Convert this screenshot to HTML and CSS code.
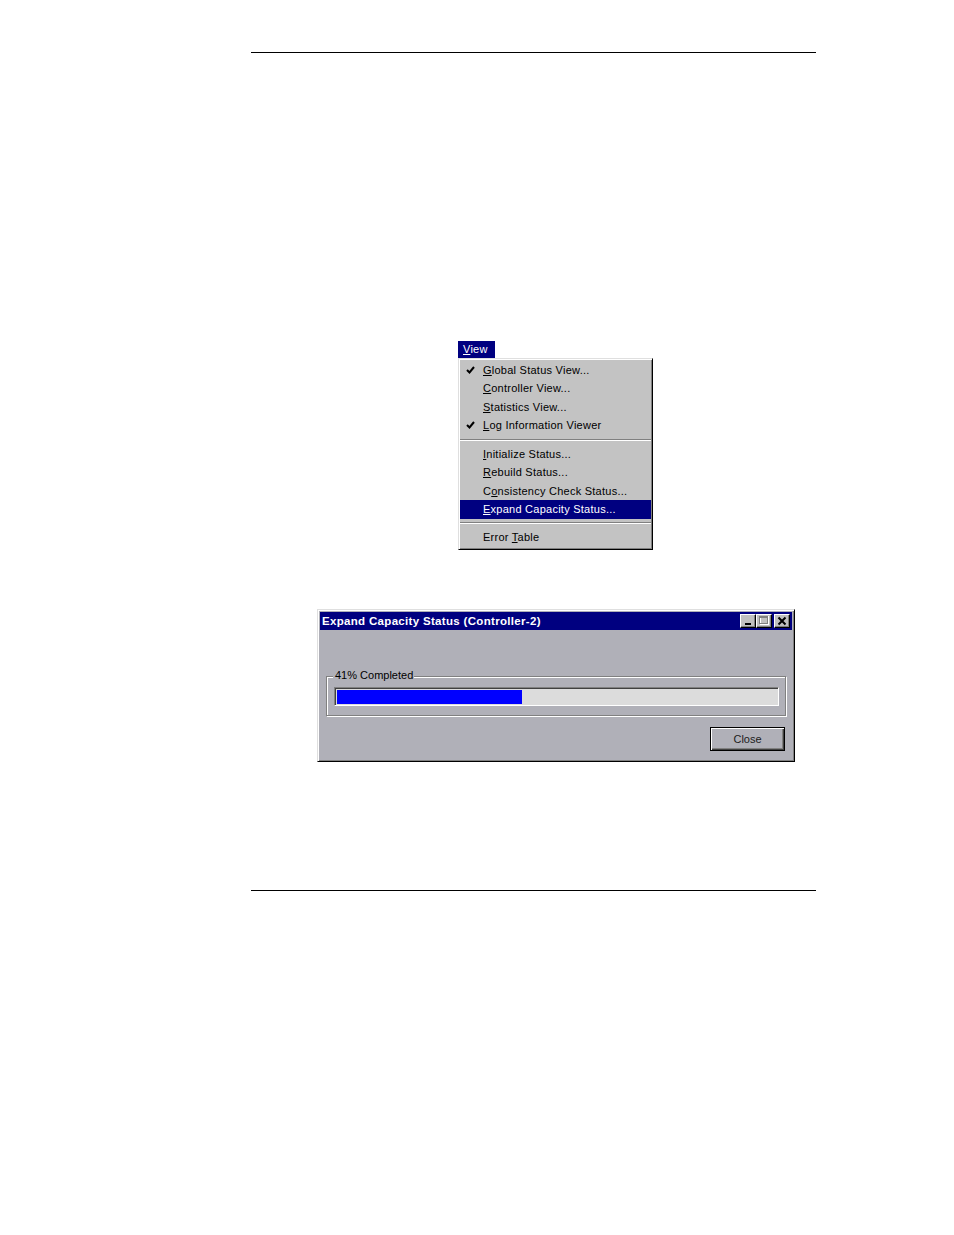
FILE: index.html
```html
<!DOCTYPE html>
<html>
<head>
<meta charset="utf-8">
<link rel="stylesheet" href="styles.css">
</head>
<body>
<div class="page">
  <div class="rule"></div>

  <div class="menu">
    <div class="menu-title"><u>V</u>iew</div>
    <div class="menu-panel">
      <div class="item"><span class="check"><svg width="9" height="9" viewBox="0 0 9 9"><path d="M1 4 L3.5 6.5 L8 1" fill="none" stroke="#000" stroke-width="2"/></svg></span><u>G</u>lobal Status View...</div>
      <div class="item"><u>C</u>ontroller View...</div>
      <div class="item"><u>S</u>tatistics View...</div>
      <div class="item"><span class="check"><svg width="9" height="9" viewBox="0 0 9 9"><path d="M1 4 L3.5 6.5 L8 1" fill="none" stroke="#000" stroke-width="2"/></svg></span><u>L</u>og Information Viewer</div>
      <div class="sep"></div>
      <div class="item"><u>I</u>nitialize Status...</div>
      <div class="item"><u>R</u>ebuild Status...</div>
      <div class="item">C<u>o</u>nsistency Check Status...</div>
      <div class="item active"><u>E</u>xpand Capacity Status...</div>
      <div class="sep sep-b"></div>
      <div class="item">Error <u>T</u>able</div>
    </div>
  </div>

  <div class="dialog">
    <div class="titlebar">
      <span class="title-text">Expand Capacity Status (Controller-2)</span>
      <div class="caption-btns">
        <div class="cbtn"><svg width="12" height="10" viewBox="0 0 12 10"><rect x="3" y="7" width="6" height="2" fill="#000"/></svg></div>
        <div class="cbtn"><svg width="12" height="10" viewBox="0 0 12 10"><rect x="2.5" y="0.5" width="8" height="8" fill="none" stroke="#fff"/><rect x="1.5" y="-0.5" width="8" height="8" fill="none" stroke="#808080"/><rect x="1" y="0" width="9" height="2" fill="#808080"/></svg></div>
        <div class="cbtn close"><svg width="12" height="10" viewBox="0 0 12 10"><path d="M2.5 1.5 L9.5 8.5 M9.5 1.5 L2.5 8.5" stroke="#000" stroke-width="2" fill="none"/></svg></div>
      </div>
    </div>
    <div class="dialog-body">
      <div class="group">
        <span class="group-label">41% Completed</span>
        <div class="progress"><div class="fill" style="width:42%"></div></div>
      </div>
      <div class="btn-row">
        <div class="button">Close</div>
      </div>
    </div>
  </div>

  <div class="rule rule-bottom"></div>
</div>
</body>
</html>
```

FILE: styles.css
```css
html, body {
  margin: 0;
  padding: 0;
  background: #fff;
}
body {
  font-family: "Liberation Sans", Arial, sans-serif;
}
.page {
  width: 565px;
  margin-left: 251px;
  padding-top: 52px;
}
.rule {
  height: 0;
  border-top: 1px solid #000;
}
.rule-bottom {
  margin-top: 128px;
}

/* Menu */
.menu {
  margin-top: 288px;
  margin-left: 207px;
  width: 195px;
  font-size: 11px;
  letter-spacing: 0.25px;
  color: #000;
}
.menu-title {
  width: 37px;
  height: 17px;
  box-sizing: border-box;
  background: #000080;
  color: #fff;
  line-height: 17px;
  padding-left: 5px;
}
.menu-panel {
  box-sizing: border-box;
  width: 195px;
  background: #c3c3c3;
  border: 1px solid;
  border-color: #dfdfdf #000 #000 #dfdfdf;
  box-shadow: inset 1px 1px 0 #fff, inset -1px -1px 0 #808080;
  padding: 1.5px 1px 2.5px 1px;
}
.item {
  position: relative;
  height: 18.5px;
  line-height: 18.5px;
  padding-left: 23px;
  white-space: nowrap;
}
.item.active {
  background: #000080;
  color: #fff;
}
.check {
  position: absolute;
  left: 6px;
  top: 5px;
  width: 9px;
  height: 9px;
  display: flex;
}
.sep {
  height: 10px;
  display: flex;
  align-items: center;
}
.sep::before {
  content: "";
  display: block;
  width: 100%;
  height: 0;
  border-top: 1px solid #808080;
  border-bottom: 1px solid #fff;
}
.sep-b {
  height: 9px;
}

/* Dialog */
.dialog {
  margin-top: 59px;
  margin-left: 66px;
  width: 478px;
  height: 153px;
  box-sizing: border-box;
  background: #b0b0b8;
  border: 1px solid;
  border-color: #dfdfdf #000 #000 #dfdfdf;
  box-shadow: inset 1px 1px 0 #fff, inset -1px -1px 0 #808080;
  padding: 2px;
  display: flex;
  flex-direction: column;
}
.titlebar {
  height: 18px;
  background: #000080;
  color: #fff;
  display: flex;
  align-items: center;
  justify-content: space-between;
  padding: 0 2px 0 2px;
}
.title-text {
  font-weight: bold;
  font-size: 11.5px;
  letter-spacing: 0.32px;
  white-space: nowrap;
}
.caption-btns {
  display: flex;
  gap: 0;
}
.cbtn {
  width: 16px;
  height: 14px;
  box-sizing: border-box;
  background: #c0c0c0;
  border: 1px solid;
  border-color: #fff #000 #000 #fff;
  box-shadow: inset -1px -1px 0 #808080;
  display: flex;
  align-items: center;
  justify-content: center;
}
.cbtn svg {
  display: block;
}
.cbtn.close {
  margin-left: 2px;
}
.dialog-body {
  flex: 1;
  display: flex;
  flex-direction: column;
  font-size: 11px;
  color: #000;
}
.group {
  position: relative;
  margin: 46px 6px 0 6px;
  border: 1px solid #808080;
  box-shadow: inset 1px 1px 0 #fff, 1px 1px 0 #fff;
  padding: 10px 6px 9px 7px;
}
.group-label {
  position: absolute;
  top: -9px;
  left: 6px;
  padding: 0 1px 0 2px;
  background: #b0b0b8;
  line-height: 14px;
  white-space: nowrap;
}
.progress {
  height: 19px;
  box-sizing: border-box;
  background: #dcdcdc;
  border-top: 1px solid #808080;
  border-left: 1px solid #808080;
  border-right: 1px solid #fff;
  border-bottom: 1px solid #fff;
  box-shadow: inset 1px 1px 0 #404040;
  padding: 2px 0 1px 2px;
  display: flex;
}
.fill {
  background: #0000ff;
  height: 100%;
}
.btn-row {
  display: flex;
  justify-content: flex-end;
  margin-top: 11px;
  padding-right: 7px;
}
.button {
  width: 75px;
  height: 24px;
  box-sizing: border-box;
  border: 1px solid #000;
  background: #b0b0b8;
  box-shadow: inset 1px 1px 0 #fff, inset -1px -1px 0 #404040, inset -2px -2px 0 #808080;
  display: flex;
  align-items: center;
  justify-content: center;
  color: #202020;
  font-size: 11px;
}
```
